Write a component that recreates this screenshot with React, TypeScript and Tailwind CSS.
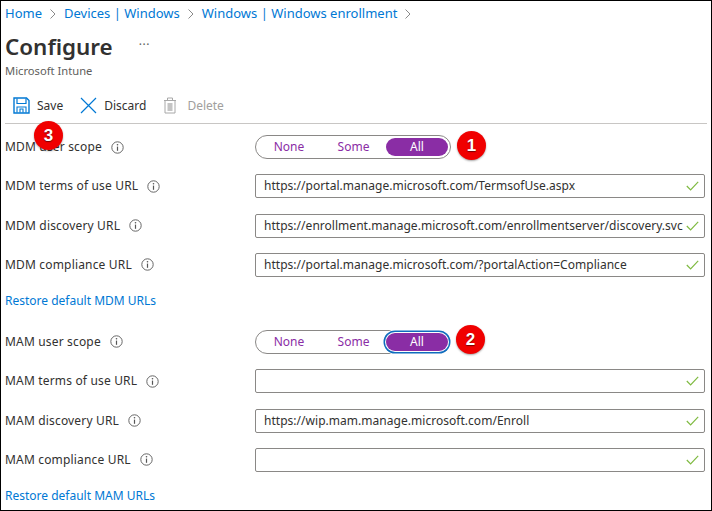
import React from "react";

const font = "font-['Noto_Sans','Open_Sans',sans-serif]";

function Chevron() {
  return (
    <svg width="8" height="12" viewBox="0 0 8 12" className="mx-[7px]">
      <path d="M1.5 1.5 L6 6 L1.5 10.5" fill="none" stroke="#8a8a8a" strokeWidth="1" />
    </svg>
  );
}

function Info() {
  return (
    <svg width="13" height="13" viewBox="0 0 13 13" className="ml-[9px] shrink-0">
      <circle cx="6.5" cy="6.5" r="5.7" fill="none" stroke="#666" strokeWidth="1" />
      <path d="M6.5 5.6V9.8" stroke="#555" strokeWidth="1.2" />
      <circle cx="6.5" cy="3.7" r="0.8" fill="#555" />
    </svg>
  );
}

function Check() {
  return (
    <svg width="13" height="10" viewBox="0 0 13 10" className="shrink-0">
      <path d="M0.8 5 L4.6 8.8 L12.2 0.8" fill="none" stroke="#7fba41" strokeWidth="1.2" />
    </svg>
  );
}

function Badge({ n, className }: { n: string; className: string }) {
  return (
    <div
      className={`absolute flex h-[29px] w-[29px] items-center justify-center rounded-full bg-[#f00000] text-[17px] font-bold text-white [text-shadow:0_1px_1px_rgba(0,0,0,0.5)] shadow-[0_1px_2px_rgba(0,0,0,0.35)] font-['Liberation_Sans',sans-serif] ${className}`}
    >
      {n}
    </div>
  );
}

function Label({ text }: { text: string }) {
  return (
    <div className="flex w-[250px] shrink-0 items-center text-[12px] tracking-[0.17px] text-[#323130]">
      <span>{text}</span>
      <Info />
    </div>
  );
}

function Toggle({ focused, badge }: { focused?: boolean; badge: React.ReactNode }) {
  return (
    <div className="relative flex h-[24px] items-center">
      <Label text={focused ? "MAM user scope" : "MDM user scope"} />
      <div className="relative flex h-[24px] w-[196px] items-center rounded-full border border-[#8a8886] pl-[1px] text-[12px] text-[#8a2da5]">
        <span className="w-[64px] text-center">None</span>
        <span className="w-[65px] text-center">Some</span>
        <span
          className={`flex h-[18px] w-[62px] items-center justify-center rounded-full bg-[#8a2da5] text-white ${
            focused ? "shadow-[0_0_0_1px_#fff,0_0_0_2.5px_#0f6cbd,0_0_0_3.5px_#fff]" : ""
          }`}
        >
          All
        </span>
      </div>
      {badge}
    </div>
  );
}

function UrlRow({ label, value }: { label: string; value?: string }) {
  return (
    <div className="flex h-[24px] items-center">
      <Label text={label} />
      <div className="flex h-[24px] w-[450px] items-center justify-between rounded-[2px] border border-[#8a8886] pl-[8px] pr-[5px] text-[12px] tracking-[0.03px] text-[#323130]">
        <span className="whitespace-nowrap">{value}</span>
        <Check />
      </div>
    </div>
  );
}

function Crumb({ children }: { children: React.ReactNode }) {
  return <span className="text-[#0078d4]">{children}</span>;
}

function Group({
  focused,
  badge,
  rows,
  link,
}: {
  focused?: boolean;
  badge: React.ReactNode;
  rows: { label: string; value?: string }[];
  link: string;
}) {
  return (
    <div className="flex flex-col gap-[15.33px]">
      <Toggle focused={focused} badge={badge} />
      {rows.map((r) => (
        <UrlRow key={r.label} label={r.label} value={r.value} />
      ))}
      <div className="flex h-[18px] items-center text-[12px] text-[#0078d4]">{link}</div>
    </div>
  );
}

export default function App() {
  return (
    <div className={`relative h-[511px] w-[712px] overflow-hidden border border-black bg-white ${font}`}>
      <div className="flex h-[25px] items-center pl-[4px] text-[13px]">
        <Crumb>Home</Crumb>
        <Chevron />
        <Crumb>Devices | Windows</Crumb>
        <Chevron />
        <Crumb>Windows | Windows enrollment</Crumb>
        <Chevron />
      </div>
      <div className="mt-[4px] flex h-[34px] items-center pl-[4px]">
        <span className="text-[22.4px] font-semibold text-[#323130]">Configure</span>
        <span className="ml-[26px] -mt-[4px] text-[12px] tracking-[0.5px] text-[#605e5c]">···</span>
      </div>
      <div className="-mt-[2px] h-[18px] pl-[4px] text-[11.2px] leading-[18px] text-[#605e5c]">Microsoft Intune</div>
      <div className="mx-[4px] mt-[9px] flex h-[35px] items-center border-b border-b-[#c8c6c4] pb-[1px] text-[12px] text-[#323130]">
        <svg width="17" height="17" viewBox="0 0 17 17" className="ml-[8px]">
          <path d="M1 1H13.5L16 3.5V16H1Z" fill="none" stroke="#0078d4" strokeWidth="1.4" />
          <path d="M4 1.5V6.5H13V1.5" fill="none" stroke="#0078d4" strokeWidth="1.2" />
          <path d="M4 15.5V10H13V15.5M7 15.5V12H10V15.5" fill="none" stroke="#0078d4" strokeWidth="1.1" />
        </svg>
        <span className="ml-[7px]">Save</span>
        <svg width="17" height="17" viewBox="0 0 17 17" className="ml-[17px]">
          <path d="M1 1L16 16M16 1L1 16" stroke="#0078d4" strokeWidth="1.2" />
        </svg>
        <span className="ml-[7px]">Discard</span>
        <svg width="14" height="17" viewBox="0 0 14 17" className="ml-[17px]">
          <path d="M1 3.5H13M4.5 3.5V1H9.5V3.5M2 3.5V16H12V3.5" fill="none" stroke="#a8a8a8" strokeWidth="1" />
          <rect x="4.5" y="6" width="5" height="8" fill="#c4c4c4" />
        </svg>
        <span className="ml-[10px] text-[#a19f9d]">Delete</span>
      </div>
      <div className="mt-[11px] flex flex-col gap-[19.67px] pl-[4px]">
        <Group
          badge={<Badge n="1" className="left-[452px] top-[-4px]" />}
          rows={[
            { label: "MDM terms of use URL", value: "https://portal.manage.microsoft.com/TermsofUse.aspx" },
            { label: "MDM discovery URL", value: "https://enrollment.manage.microsoft.com/enrollmentserver/discovery.svc" },
            { label: "MDM compliance URL", value: "https://portal.manage.microsoft.com/?portalAction=Compliance" },
          ]}
          link="Restore default MDM URLs"
        />
        <Group
          focused
          badge={<Badge n="2" className="left-[451px] top-[-5px]" />}
          rows={[
            { label: "MAM terms of use URL" },
            { label: "MAM discovery URL", value: "https://wip.mam.manage.microsoft.com/Enroll" },
            { label: "MAM compliance URL" },
          ]}
          link="Restore default MAM URLs"
        />
      </div>
      <Badge n="3" className="left-[33px] top-[120px]" />
    </div>
  );
}
